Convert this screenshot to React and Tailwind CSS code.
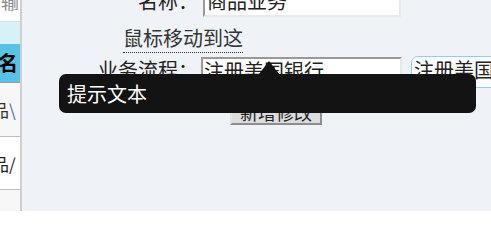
import React from "react";

const font = { fontFamily: '"Noto Sans CJK SC", "Noto Sans", sans-serif' };

function SideStrip() {
    return (
        <div className="w-[22px] min-w-[22px] max-w-[22px] shrink-0 border-r-2 border-[#cfcfcf] flex flex-col overflow-hidden leading-none">
            <div className="h-[22px] bg-white border-b border-[#dcdcdc] overflow-hidden">
                <div className="-mt-[8px] ml-[1px] text-[#888] text-[18px] whitespace-nowrap">输</div>
            </div>
            <div className="h-[22px] bg-[#d6f1f7]"></div>
            <div className="h-[39px] bg-[#56c3e6] border-b border-[#9a9a9a] flex items-center overflow-hidden">
                <span className="-ml-[2px] font-bold text-[20px] text-black whitespace-nowrap">名</span>
            </div>
            <div className="h-[54px] bg-[#f7f7f7] border-b border-[#bdbdbd] flex items-center overflow-hidden">
                <span className="-ml-[8px] text-[17px] text-[#333] whitespace-nowrap">品<span className="text-[#3b6fc4]">\</span></span>
            </div>
            <div className="h-[53px] bg-white border-b border-[#bdbdbd] flex items-center overflow-hidden">
                <span className="-ml-[8px] text-[17px] text-[#222] whitespace-nowrap">品/</span>
            </div>
            <div className="flex-1 bg-[#f7f7f7]"></div>
        </div>
    );
}

export default function App() {
    return (
        <div className="w-[491px] h-[211px] flex overflow-hidden bg-[#eff3f7] text-[#222]" style={font}>
            <SideStrip />
            <div className="relative flex-1 flex flex-col">
                {/* 名称 */}
                <div className="flex items-center -mt-[15px] h-[32px]">
                    <div className="w-[176px] text-right text-[20px] leading-none">名称：</div>
                    <div className="ml-[5px] w-[198px] h-[32px] bg-white border-2 border-t-[#999] border-l-[#999] border-b-[#e9e9e9] border-r-[#e9e9e9] flex items-center px-[2px] text-[20px] leading-none">
                        商品业务
                    </div>
                </div>
                {/* hover target */}
                <div className="mt-[8px] ml-[101px]">
                    <span className="text-[20px] leading-[26px] text-[#333] border-b border-dotted border-[#333]">
                        鼠标移动到这
                    </span>
                </div>
                {/* 业务流程 */}
                <div className="flex items-start mt-[5px]">
                    <div className="w-[176px] text-right text-[20px] leading-none pt-[4px]">业务流程：</div>
                    <div className="ml-[3px] mt-[1px] w-[201px] h-[32px] bg-white border-2 border-t-[#999] border-l-[#999] border-b-[#e9e9e9] border-r-[#e9e9e9] px-[1px] pt-[2px] text-[20px] leading-none">
                        注册美国银行
                    </div>
                    <div className="ml-[9px] w-[100px] h-[32px] bg-white border border-[#90cdf4] rounded-[7px] px-[2px] pt-[3px] text-[20px] leading-none whitespace-nowrap shrink-0">
                        注册美国银行
                    </div>
                </div>
                {/* button */}
                <div className="ml-[208px] mt-[9px]">
                    <button className="w-[92px] h-[27px] bg-[#dcdcdc] border-2 border-t-[#e4e4e4] border-l-[#e4e4e4] border-b-[#8e8e8e] border-r-[#8e8e8e] text-[18px] leading-none text-[#222]">
                        新增修改
                    </button>
                </div>
                {/* tooltip */}
                <div className="absolute left-[37px] top-[74px] w-[417px] h-[39px] bg-[#131313] rounded-[7px] flex items-center px-[8px]">
                    <span className="text-white text-[20px] leading-none">提示文本</span>
                    <div className="absolute left-[200px] -top-[13px] w-0 h-0 border-l-[10px] border-r-[10px] border-b-[13px] border-l-transparent border-r-transparent border-b-[#131313]"></div>
                </div>
            </div>
        </div>
    );
}
